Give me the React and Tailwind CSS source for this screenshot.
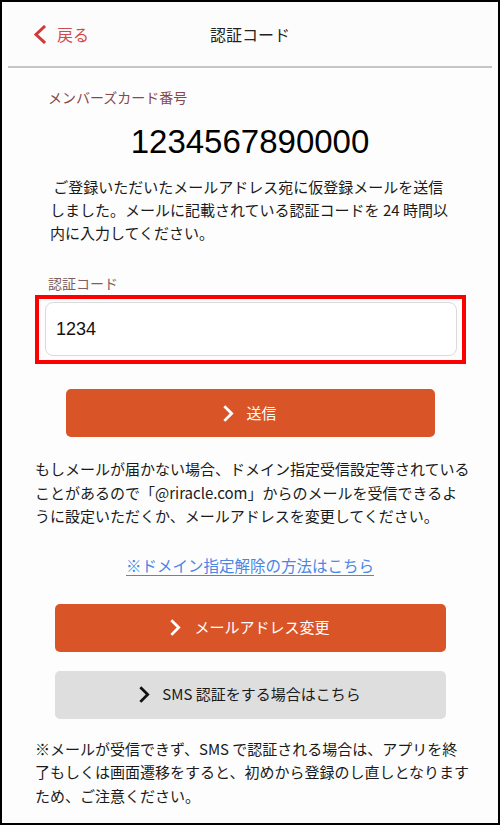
import React from "react";

function Chevron({ color = "#fff", className = "" }) {
  return (
    <svg viewBox="0 0 10 16" className={className} fill="none">
      <path d="M2 2 L8 8 L2 14" stroke={color} strokeWidth="2.6" strokeLinecap="square" strokeLinejoin="miter" />
    </svg>
  );
}

export default function App() {
  const font = { fontFamily: '"Noto Sans CJK JP", "Noto Sans", sans-serif' };
  return (
    <div
      className="w-[500px] h-[825px] border-2 border-black bg-[#fdfdfd] overflow-hidden text-[#1a1a1a]"
      style={font}
    >
      {/* header */}
      <div className="mx-[6px] h-[66px] border-b-2 border-[#c6c6c6] bg-[#fcfcfc] grid grid-cols-[1fr_auto_1fr] items-center">
        <div className="flex items-center pl-[25px] gap-[11px]">
          <svg viewBox="0 0 13 19" className="w-[13px] h-[19px]" fill="none">
            <path d="M11 2 L3 9.5 L11 17" stroke="#cf3b3b" strokeWidth="3" strokeLinecap="square" />
          </svg>
          <span className="text-[16px] leading-[20px] text-[#d24b4b]">戻る</span>
        </div>
        <div className="text-[16px] leading-[20px] text-[#222]">認証コード</div>
        <div />
      </div>

      {/* content */}
      <div className="flex flex-col">
        <div className="mt-[19px] pl-[46px] text-[14px] leading-[20px] text-[#8a4848]">メンバーズカード番号</div>
        <div className="mt-[15px] text-center text-[33px] leading-[40px] text-black font-['Liberation_Sans',sans-serif]">1234567890000</div>
        <p className="mt-[13px] pl-[48px] text-[15px] leading-[23px] text-[#1a1a1a]">
          &nbsp;ご登録いただいたメールアドレス宛に仮登録メールを送信
          <br />
          しました。メールに記載されている認証コードを 24 時間以
          <br />
          内に入力してください。
        </p>

        <div className="mt-[29px] pl-[46px] text-[14px] leading-[20px] text-[#7d5f5f]">認証コード</div>
        <div className="mt-[2px] ml-[33px] w-[431px] h-[69px] border-4 border-[#ff0000] pl-[6px] pr-[5px] pt-[3px] pb-[4px]">
          <div className="h-full rounded-[8px] border border-[#dadada] bg-white flex items-center pl-[10px] text-[18px] text-[#111] font-['Liberation_Sans',sans-serif]">
            1234
          </div>
        </div>

        <button className="mt-[25px] mx-auto w-[369px] h-[48px] rounded-[5px] bg-[#d95528] flex items-center justify-center gap-[12px] text-white text-[15px]">
          <Chevron className="w-[11px] h-[17px]" />
          <span>送信</span>
        </button>

        <p className="mt-[20px] pl-[33px] text-[15px] leading-[23.5px] text-[#1a1a1a] whitespace-nowrap">
          もしメールが届かない場合、ドメイン指定受信設定等されている
          <br />
          ことがあるので「@riracle.com」からのメールを受信できるよ
          <br />
          うに設定いただくか、メールアドレスを変更してください。
        </p>

        <div className="mt-[26px] text-center text-[15.5px] leading-[23px]">
          <a className="text-[#4a86e4] underline underline-offset-[3px]">※ドメイン指定解除の方法はこちら</a>
        </div>

        <button className="mt-[27px] mx-auto w-[391px] h-[48px] rounded-[5px] bg-[#d95528] flex items-center justify-center gap-[13px] text-white text-[15px]">
          <Chevron className="w-[11px] h-[17px]" />
          <span>メールアドレス変更</span>
        </button>

        <button className="mt-[19px] mx-auto w-[391px] h-[48px] rounded-[5px] bg-[#dedede] flex items-center justify-center gap-[12px] text-[#1a1a1a] text-[15px]">
          <Chevron color="#111" className="w-[11px] h-[17px]" />
          <span>SMS 認証をする場合はこちら</span>
        </button>

        <p className="mt-[18px] pl-[33px] text-[15px] leading-[23.5px] text-[#1a1a1a] whitespace-nowrap">
          ※メールが受信できず、SMS で認証される場合は、アプリを終
          <br />
          了もしくは画面遷移をすると、初めから登録のし直しとなります
          <br />
          ため、ご注意ください。
        </p>
      </div>
    </div>
  );
}
